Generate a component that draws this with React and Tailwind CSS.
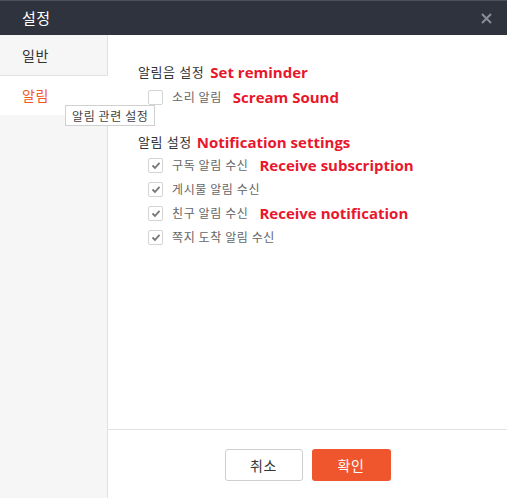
import React from "react";

const Check = ({ checked }) => (
  <span className="w-[15px] h-[15px] border border-[#d4d4d4] rounded-[2px] bg-white flex items-center justify-center shrink-0">
    {checked && (
      <svg width="10" height="9" viewBox="0 0 10 9">
        <path d="M1.5 4.5 L4 7 L8.5 1.8" fill="none" stroke="#777" strokeWidth="1.8" />
      </svg>
    )}
  </span>
);

const Row = ({ checked, label, note, className = "" }) => (
  <div className={"flex items-center h-[24px] pl-[10px] " + className}>
    <Check checked={checked} />
    <span className="ml-[9px] text-[12px] text-[#666] tracking-[0.6px]">{label}</span>
    {note && (
      <span className="ml-[11px] text-[15px] font-bold text-[#e8172c] [font-family:'Open_Sans',sans-serif]">
        {note}
      </span>
    )}
  </div>
);

export default function App() {
  return (
    <div className="relative w-[507px] h-[498px] flex flex-col bg-white [font-family:'Noto_Sans_CJK_KR','Noto_Sans',sans-serif]">
      <div className="h-[35px] bg-[#2f333e] border-t border-[#4d515b] flex items-center justify-between pl-[22px] pr-[15px]">
        <span className="text-white text-[15px] tracking-[0.5px]">설정</span>
        <svg width="11" height="11" viewBox="0 0 11 11">
          <path d="M1 1 L10 10 M10 1 L1 10" stroke="#8a8d96" strokeWidth="2" />
        </svg>
      </div>
      <div className="flex flex-1">
        <div className="w-[108px] bg-[#f6f6f6] border-r border-[#e2e2e2] flex flex-col">
          <div className="h-[41px] border-b border-[#e2e2e2] flex items-center pl-[22px] text-[14px] text-[#333] tracking-[0.5px]">
            일반
          </div>
          <div className="h-[39px] bg-white -mr-px flex items-center pl-[22px] text-[14px] text-[#f05a28] tracking-[0.5px]">
            알림
          </div>
        </div>
        <div className="flex-1 flex flex-col">
          <div className="flex-1 pt-[27px] pl-[30px]">
            <div className="flex items-center h-[20px]">
              <span className="text-[13px] text-[#333] tracking-[0.6px]">알림음 설정</span>
              <span className="ml-[6px] text-[15px] font-bold text-[#e8172c] [font-family:'Open_Sans',sans-serif]">
                Set reminder
              </span>
            </div>
            <Row checked={false} label="소리 알림" note="Scream Sound" className="mt-[3px]" />
            <div className="flex items-center h-[20px] mt-[23px]">
              <span className="text-[13px] text-[#333] tracking-[0.6px]">알림 설정</span>
              <span className="ml-[5px] text-[15px] font-bold text-[#e8172c] [font-family:'Open_Sans',sans-serif]">
                Notification settings
              </span>
            </div>
            <div className="mt-[1px]">
              <Row checked label="구독 알림 수신" note="Receive subscription" />
              <Row checked label="게시물 알림 수신" />
              <Row checked label="친구 알림 수신" note="Receive notification" />
              <Row checked label="쪽지 도착 알림 수신" />
            </div>
          </div>
          <div className="h-[69px] border-t border-[#e2e2e2] flex items-start justify-center gap-[9px] pt-[19px]">
            <button className="w-[78px] h-[32px] border border-[#cfcfcf] rounded-[3px] bg-white text-[14px] text-[#333] tracking-[0.5px]">
              취소
            </button>
            <button className="w-[79px] h-[32px] rounded-[3px] bg-[#f0562e] text-[14px] text-white tracking-[0.5px]">
              확인
            </button>
          </div>
        </div>
      </div>
      <div className="absolute left-[65px] top-[105px] h-[21px] px-[6px] bg-white border border-[#d0d0d0] flex items-center text-[12px] text-[#444] tracking-[0.6px]">
        알림 관련 설정
      </div>
    </div>
  );
}
